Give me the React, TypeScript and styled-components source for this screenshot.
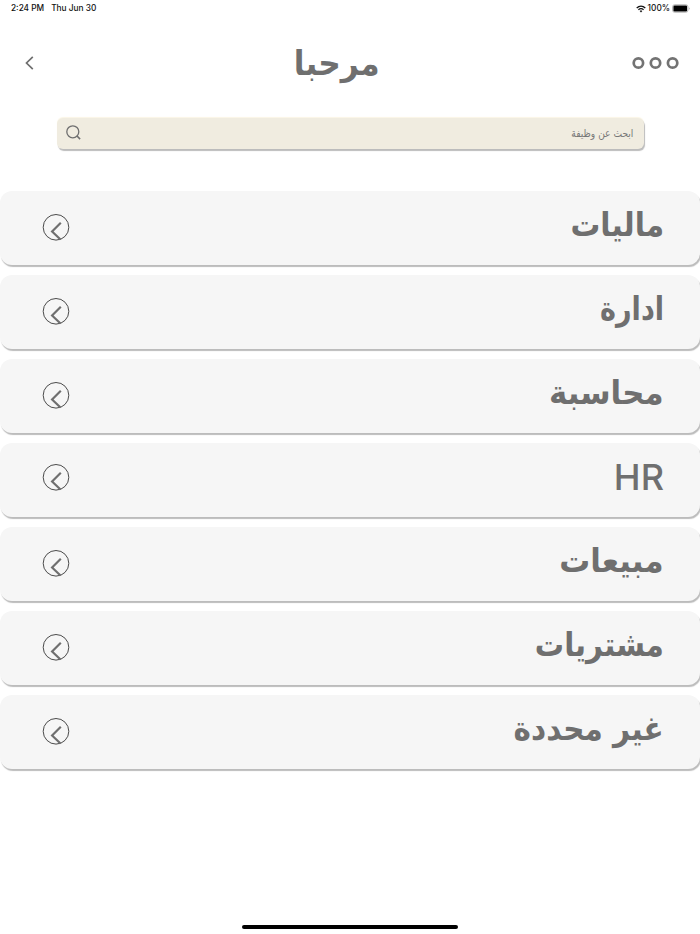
import React from "react";
import styled, { createGlobalStyle } from "styled-components";

const GlobalStyle = createGlobalStyle`
  *, *::before, *::after { box-sizing: border-box; }
  body { margin: 0; background: #fff; }
`;

const Screen = styled.div`
  display: flex;
  flex-direction: column;
  height: 934px;
  overflow: hidden;
  background: #fff;
  color: #6f6f6f;
  font-family: "DejaVu Sans", sans-serif;
`;

const StatusBar = styled.div`
  display: flex;
  justify-content: space-between;
  align-items: center;
  height: 17px;
  padding: 0 10px 0 11px;
  font: 500 8.3px/17px Inter, sans-serif;
  color: #111;
`;

const StatusGroup = styled.div<{ $gap: number }>`
  display: flex;
  align-items: center;
  gap: ${({ $gap }) => $gap}px;
  white-space: nowrap;
`;

const Header = styled.header`
  display: grid;
  grid-template-columns: 100px 1fr 100px;
  align-items: center;
  height: 92px;
  padding: 0 20px 0 24px;
`;

const IconButton = styled.button<{ $end?: boolean }>`
  display: flex;
  justify-content: ${({ $end }) => ($end ? "flex-end" : "flex-start")};
  padding: 0;
  border: 0;
  background: none;
  color: inherit;
`;

const Title = styled.h1`
  margin: 0;
  padding: 0 30px 1px 0;
  text-align: center;
  font-size: 34px;
  line-height: 40px;
  font-weight: 700;
`;

const TitleText = styled.span<{ $stretch: number }>`
  display: inline-block;
  transform: scaleX(${({ $stretch }) => $stretch});
`;

const SearchBar = styled.div`
  display: flex;
  justify-content: space-between;
  align-items: center;
  flex: none;
  height: 31px;
  margin: 9px 56px 0 57px;
  padding: 0 11px 2px 9px;
  border-radius: 6px;
  background: #f0ece0;
  box-shadow: 1px 2px 1px #bcbcbc, 0 -1px 1px #fbf6e6;
`;

const Placeholder = styled.span`
  font-size: 10.5px;
  line-height: 18px;
  color: #777;
  transform: scaleX(0.87);
  transform-origin: right center;
`;

const List = styled.main`
  display: flex;
  flex-direction: column;
  gap: 10px;
  padding-top: 42px;
`;

const Row = styled.div`
  display: flex;
  justify-content: space-between;
  align-items: flex-start;
  height: 74px;
  padding: 0 36px 0 42px;
  border-radius: 12px;
  background: #f6f6f6;
  box-shadow: 1px 2px 1px #bcbcbc;
`;

const CircleButton = styled.button<{ $raised?: boolean }>`
  display: block;
  width: 28px;
  height: 28px;
  margin: ${({ $raised }) => ($raised ? 20 : 22)}px 0 0;
  padding: 0;
  border: 0;
  background: none;
`;

const Label = styled.span<{ $latin?: boolean; $stretch: number }>`
  display: block;
  direction: rtl;
  white-space: nowrap;
  margin-top: 12px;
  font-family: ${({ $latin }) => ($latin ? 'Inter, "Liberation Sans"' : '"DejaVu Sans"')}, sans-serif;
  font-size: ${({ $latin }) => ($latin ? 36 : 33)}px;
  font-weight: ${({ $latin }) => ($latin ? 500 : 700)};
  line-height: 44px;
  transform: scaleX(${({ $stretch }) => $stretch});
  transform-origin: right center;
`;

const Footer = styled.footer`
  display: flex;
  justify-content: center;
  margin-top: auto;
  padding-bottom: 5px;
`;

const HomeIndicator = styled.div`
  width: 216px;
  height: 4px;
  border-radius: 2px;
  background: #000;
`;

const WifiIcon = () => (
  <svg width="10" height="8" viewBox="0 0 10 8" fill="none" stroke="#111" strokeWidth="1.3">
    <path d="M.7 2.9C3.2.7 6.8.7 9.3 2.9M2.4 4.7C4 3.4 6 3.4 7.6 4.7" />
    <path d="M3.7 5.9C4.5 5.3 5.5 5.3 6.3 5.9L5 7.4Z" fill="#111" stroke="none" />
  </svg>
);

const BatteryIcon = () => (
  <svg width="18" height="9" viewBox="0 0 18 9">
    <rect x=".5" y=".7" width="15.5" height="7.6" rx="2.2" fill="#fff" stroke="#aaa" strokeWidth=".8" />
    <rect x="1.4" y="1.6" width="13.7" height="5.8" rx="1.2" fill="#000" />
    <path d="M17 3.4C17.8 3.8 17.8 5.2 17 5.6Z" fill="#999" />
  </svg>
);

const BackIcon = () => (
  <svg width="10" height="14" viewBox="0 0 10 14" fill="none" stroke="#6f6f6f" strokeWidth="1.7">
    <path d="M8.8.8 2.5 7 8.8 13.2" />
  </svg>
);

const MoreIcon = () => (
  <svg width="48" height="14" viewBox="0 0 48 14" fill="none" stroke="#737373" strokeWidth="2.7">
    <circle cx="6.4" cy="7" r="4.7" />
    <circle cx="23.5" cy="7" r="4.7" />
    <circle cx="40.6" cy="7" r="4.7" />
  </svg>
);

const SearchIcon = () => (
  <svg width="15" height="15" viewBox="0 0 15 15" fill="none" stroke="#6f6f6f" strokeWidth="1.3">
    <circle cx="6.8" cy="6.8" r="6" />
    <path d="m10.8 10.8 3.3 3.3" strokeWidth="1.6" />
  </svg>
);

const CircleChevronIcon = () => (
  <svg width="28" height="28" viewBox="0 0 28 28" fill="none">
    <circle cx="14" cy="14.3" r="12.8" stroke="#4b4b4b" />
    <path d="M18.8 9.8 10.1 18.5 18.5 26.5" stroke="#6f6f6f" strokeWidth="2.2" />
  </svg>
);

type Category = { label: string; stretch: number; latin?: boolean };

const categories: Category[] = [
  { label: "ماليات", stretch: 0.9 },
  { label: "ادارة", stretch: 0.82 },
  { label: "محاسبة", stretch: 0.935 },
  { label: "HR", stretch: 1, latin: true },
  { label: "مبيعات", stretch: 0.935 },
  { label: "مشتريات", stretch: 0.885 },
  { label: "غير محددة", stretch: 0.895 },
];

export default function App() {
  return (
    <Screen>
      <GlobalStyle />
      <StatusBar>
        <StatusGroup $gap={7}>
          <span>2:24 PM</span>
          <span>Thu Jun 30</span>
        </StatusGroup>
        <StatusGroup $gap={2}>
          <WifiIcon />
          <span>100%</span>
          <BatteryIcon />
        </StatusGroup>
      </StatusBar>
      <Header>
        <IconButton aria-label="رجوع"><BackIcon /></IconButton>
        <Title><TitleText $stretch={0.92}>مرحبا</TitleText></Title>
        <IconButton aria-label="المزيد" $end><MoreIcon /></IconButton>
      </Header>
      <SearchBar>
        <SearchIcon />
        <Placeholder>ابحث عن وظيفة</Placeholder>
      </SearchBar>
      <List>
        {categories.map(({ label, stretch, latin }) => (
          <Row key={label}>
            <CircleButton aria-label={label} $raised={latin}><CircleChevronIcon /></CircleButton>
            <Label $latin={latin} $stretch={stretch}>{label}</Label>
          </Row>
        ))}
      </List>
      <Footer><HomeIndicator /></Footer>
    </Screen>
  );
}
